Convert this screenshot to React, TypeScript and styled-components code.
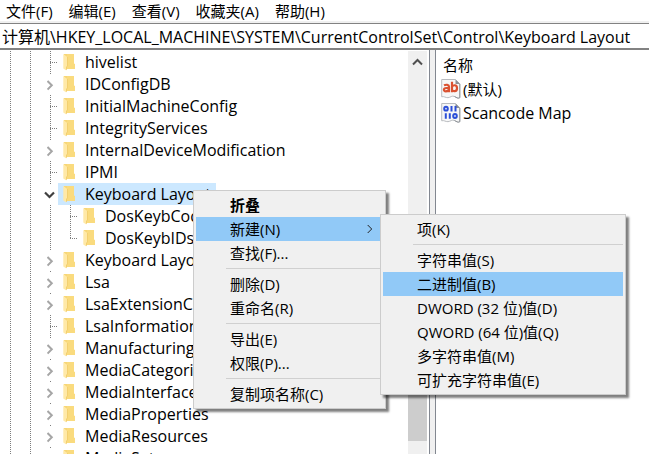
import React from "react";
import styled, { createGlobalStyle, css } from "styled-components";

const GlobalStyle = createGlobalStyle`
  * { box-sizing: border-box; }
  body {
    margin: 0;
    background: #fff;
    color: #000;
    overflow: hidden;
  }
  body, button, input {
    font-family: "Open Sans", "Noto Sans CJK SC", sans-serif;
    font-size: 15px;
    line-height: 22px;
  }
  ul { list-style: none; margin: 0; padding: 0; }
  button { border: 0; padding: 0; background: none; color: inherit; text-align: left; white-space: nowrap; }
`;

const dots = "#7d7d7d";

const Window = styled.div`
  position: relative;
  display: flex;
  flex-direction: column;
  height: 100vh;
  overflow: hidden;
`;

const MenuBar = styled.nav`
  display: flex;
  gap: 16px;
  height: 23px;
  padding-left: 6px;
  border-bottom: 2px solid #f0f0f0;
`;

const AddressInput = styled.input`
  height: 27px;
  width: 100%;
  padding: 0 2px;
  border: solid #828282;
  border-width: 1px 0 2px;
  outline: none;
  background: #fff;
  color: #000;
  font-size: 16px;
`;

const Panes = styled.main`
  display: flex;
  flex: 1;
  min-height: 0;
`;

const TreePane = styled.section`
  display: flex;
  flex: 0 0 66.25%;
  min-width: 0;
  padding-top: 1px;
  border-right: 1px solid #828790;
`;

const Tree = styled.ul`
  flex: 1;
  min-width: 0;
  overflow: hidden;
`;

const TreeRow = styled.li`
  display: flex;
  height: 22px;
`;

const vertical = `linear-gradient(${dots} 50%, transparent 50%) 10px 0 / 1px 2px repeat-y`;

const Guide = styled.span`
  flex: none;
  width: 20px;
  background: ${vertical};
`;

type BranchKind = "leaf" | "last" | "closed" | "open";

const Branch = styled.span<{ $kind: BranchKind }>`
  display: flex;
  flex: none;
  width: 18px;
  ${({ $kind }) =>
    ($kind === "leaf" || $kind === "last") &&
    css`
      height: ${$kind === "last" ? "12px" : "22px"};
      background: ${vertical};
    `}
  ${({ $kind }) =>
    ($kind === "closed" || $kind === "open") &&
    css`
      background: linear-gradient(${dots}, ${dots}) 10px 0 / 1px 1px no-repeat;
    `}
`;

const Stub = styled.span`
  width: 100%;
  margin-left: 10px;
  height: 12px;
  background: linear-gradient(90deg, ${dots} 50%, transparent 50%) 0 11px / 2px 1px repeat-x;
`;

const Expander = styled.button`
  display: flex;
  align-items: center;
  justify-content: flex-end;
  width: 100%;
`;

const TreeLabel = styled.button<{ $selected?: boolean }>`
  display: flex;
  align-items: center;
  gap: 9px;
  padding: 0 5px;
  font-size: 16px;
  background: ${({ $selected }) => ($selected ? "#cce8ff" : "transparent")};
`;

const ScrollBar = styled.div`
  display: flex;
  flex-direction: column;
  width: 19px;
  margin-right: 2px;
  background: #f0f0f0;
`;

const ScrollButton = styled.button`
  display: flex;
  justify-content: center;
  align-items: center;
  height: 21px;
`;

const Thumb = styled.div`
  flex: 1;
  margin: 180px 0 13px;
  background: #cdcdcd;
`;

const Splitter = styled.div`
  width: 5px;
  background: #f0f0f0;
`;

const ValuePane = styled.section`
  flex: 1;
  min-width: 0;
  padding: 3px 5px;
  border-left: 1px solid #828790;
`;

const ValueTable = styled.table`
  border-collapse: collapse;
  th, td { height: 24px; padding: 0; }
  th { font-weight: 400; text-align: left; padding-left: 2px; }
`;

const ValueName = styled.span<{ $latin?: boolean }>`
  display: flex;
  align-items: center;
  gap: 2px;
  font-size: ${({ $latin }) => ($latin ? "16px" : "15px")};
  white-space: nowrap;
`;

const PopupMenu = styled.ul`
  position: absolute;
  padding: 2px;
  border: 1px solid #ccc;
  background: #f0f0f0;
  box-shadow: 3px 3px 2px rgba(0, 0, 0, 0.5);
`;

const ContextMenu = styled(PopupMenu)`
  left: 193px;
  top: 190px;
  width: 193px;
`;

const SubMenu = styled(PopupMenu)`
  left: calc(100% - 3px);
  top: -3px;
  width: 246px;
`;

const MenuEntry = styled.li`
  position: relative;
`;

const MenuButton = styled.button<{ $active?: boolean; $default?: boolean }>`
  display: flex;
  align-items: center;
  justify-content: space-between;
  width: 100%;
  height: 24px;
  padding: 0 10px 0 34px;
  font-weight: ${({ $default }) => ($default ? 700 : 400)};
  background: ${({ $active }) => ($active ? "#91c9f7" : "transparent")};
`;

const Separator = styled.li`
  height: 7px;
  padding: 3px 0 0 30px;
  &::before { content: ""; display: block; height: 1px; background: #d0d0d0; }
`;

const Icon = styled.svg`
  flex: none;
  display: block;
`;

const FolderIcon = () => (
  <Icon width="13" height="18" viewBox="0 0 13 18" aria-hidden="true">
    <path d="M1 1H11V10.5L12 11.5V16H1Z" fill="#f7d676" />
    <path d="M4 1H11V10.5L12 11.5V16H4Z" fill="#fadb7e" />
    <path d="M0.3 1L4.3 4V13L3.3 14V17.6L0.3 15.5Z" fill="#ffe9a8" />
    <path d="M4.5 4V13L3.5 14V17" fill="none" stroke="#efc660" strokeWidth="0.6" />
  </Icon>
);

const ClosedIcon = () => (
  <Icon width="11" height="22" viewBox="0 0 11 22" aria-hidden="true">
    <path d="M0.5 8L4.8 12.3L0.5 16.6" fill="none" stroke="#a6a6a6" strokeWidth="2" />
  </Icon>
);

const OpenIcon = () => (
  <Icon width="14" height="22" viewBox="0 0 14 22" aria-hidden="true">
    <path d="M1 9.5L5.5 14L10 9.5" fill="none" stroke="#404040" strokeWidth="2.2" />
  </Icon>
);

const Paper = ({ children }: { children: React.ReactNode }) => (
  <Icon width="20" height="20" viewBox="0 0 20 20" aria-hidden="true">
    <path
      d="M0.7 0.5H14.5L18.8 4.8V18.7C17 20 15.5 18.5 13.5 17.5C11 16.2 9.5 18.5 7 18.7C4.5 18.8 3 17 0.7 17.8Z"
      fill="#f7f7f7"
      stroke="#b9bcc0"
    />
    <path d="M14.5 0.5L19 5H14.5Z" fill="#8b9096" />
    <path d="M18.8 5V18.7C17 19.8 15.5 18.5 13.5 17.5" fill="none" stroke="#8f9499" />
    {children}
  </Icon>
);

const StringIcon = () => (
  <Paper>
    <g fill="none" stroke="#da5130" strokeWidth="2.2">
      <path d="M3 6.4C5 5.3 8 5.5 8 7.7V13.2M8 9H5.3C2.2 9 2.2 12.3 4.7 12.3C6.3 12.3 8 11.4 8 9.8" />
      <path d="M11 2.8V13.2M11 8C11.6 5.8 16 5.2 16 9.2C16 13.2 11.6 12.7 11 10.5" />
    </g>
  </Paper>
);

const BinaryIcon = () => (
  <Paper>
    <g fill="none" stroke="#2c4fd8" strokeWidth="2">
      <ellipse cx="5" cy="5.7" rx="1.8" ry="1.9" />
      <path d="M10.5 3V8.5M14.5 3V8.5" />
      <path d="M4.8 10.3V15.8M8.8 10.3V15.8" />
      <ellipse cx="14" cy="13" rx="1.8" ry="1.9" />
    </g>
  </Paper>
);

interface TreeNode {
  name: string;
  kind: BranchKind;
  depth?: number;
}

const nodes: TreeNode[] = [
  { name: "hivelist", kind: "leaf" },
  { name: "IDConfigDB", kind: "closed" },
  { name: "InitialMachineConfig", kind: "leaf" },
  { name: "IntegrityServices", kind: "leaf" },
  { name: "InternalDeviceModification", kind: "closed" },
  { name: "IPMI", kind: "leaf" },
  { name: "Keyboard Layout", kind: "open" },
  { name: "DosKeybCodes", kind: "leaf", depth: 1 },
  { name: "DosKeybIDs", kind: "last", depth: 1 },
  { name: "Keyboard Layouts", kind: "closed" },
  { name: "Lsa", kind: "closed" },
  { name: "LsaExtensionConfig", kind: "closed" },
  { name: "LsaInformation", kind: "leaf" },
  { name: "ManufacturingMode", kind: "closed" },
  { name: "MediaCategories", kind: "closed" },
  { name: "MediaInterfaces", kind: "closed" },
  { name: "MediaProperties", kind: "closed" },
  { name: "MediaResources", kind: "closed" },
  { name: "MediaSets", kind: "closed" },
];

const TreeItem = ({ name, kind, depth = 0 }: TreeNode) => (
  <TreeRow role="treeitem" aria-expanded={kind === "open" ? true : kind === "closed" ? false : undefined}>
    {Array.from({ length: depth + 2 }, (_, i) => (
      <Guide key={i} />
    ))}
    <Branch $kind={kind}>
      {kind === "closed" || kind === "open" ? (
        <Expander aria-label={`${name} ${kind === "open" ? "折叠" : "展开"}`}>
          {kind === "open" ? <OpenIcon /> : <ClosedIcon />}
        </Expander>
      ) : (
        <Stub />
      )}
    </Branch>
    <TreeLabel $selected={kind === "open"}>
      <FolderIcon />
      {name}
    </TreeLabel>
  </TreeRow>
);

interface Command {
  label: string;
  active?: boolean;
  bold?: boolean;
  children?: (Command | null)[];
}

const newCommands: (Command | null)[] = [
  { label: "项(K)" },
  null,
  { label: "字符串值(S)" },
  { label: "二进制值(B)", active: true },
  { label: "DWORD (32 位)值(D)" },
  { label: "QWORD (64 位)值(Q)" },
  { label: "多字符串值(M)" },
  { label: "可扩充字符串值(E)" },
];

const commands: (Command | null)[] = [
  { label: "折叠", bold: true },
  { label: "新建(N)", active: true, children: newCommands },
  { label: "查找(F)..." },
  null,
  { label: "删除(D)" },
  { label: "重命名(R)" },
  null,
  { label: "导出(E)" },
  { label: "权限(P)..." },
  null,
  { label: "复制项名称(C)" },
];

const Entries = ({ items }: { items: (Command | null)[] }) => (
  <>
    {items.map((item, i) =>
      item ? (
        <MenuEntry key={i} role="none">
          <MenuButton role="menuitem" $active={item.active} $default={item.bold}>
            {item.label}
            {item.children && (
              <Icon width="6" height="10" viewBox="0 0 6 10" aria-hidden="true">
                <path d="M0.7 1L4.7 5L0.7 9" fill="none" stroke="#222" />
              </Icon>
            )}
          </MenuButton>
          {item.children && (
            <SubMenu role="menu">
              <Entries items={item.children} />
            </SubMenu>
          )}
        </MenuEntry>
      ) : (
        <Separator key={i} role="separator" />
      ),
    )}
  </>
);

export default function App() {
  return (
    <Window>
      <GlobalStyle />
      <MenuBar>
        {["文件(F)", "编辑(E)", "查看(V)", "收藏夹(A)", "帮助(H)"].map((label) => (
          <button key={label}>{label}</button>
        ))}
      </MenuBar>
      <AddressInput
        aria-label="地址"
        defaultValue={"计算机\\HKEY_LOCAL_MACHINE\\SYSTEM\\CurrentControlSet\\Control\\Keyboard Layout"}
      />
      <Panes>
        <TreePane>
          <Tree role="tree">
            {nodes.map((node) => (
              <TreeItem key={node.name} {...node} />
            ))}
          </Tree>
          <ScrollBar>
            <ScrollButton aria-label="向上滚动">
              <Icon width="11" height="8" viewBox="0 0 11 8" aria-hidden="true">
                <path d="M1 6.5L5.5 2L10 6.5" fill="none" stroke="#505050" strokeWidth="2" />
              </Icon>
            </ScrollButton>
            <Thumb />
          </ScrollBar>
        </TreePane>
        <Splitter />
        <ValuePane>
          <ValueTable>
            <thead>
              <tr>
                <th>名称</th>
              </tr>
            </thead>
            <tbody>
              <tr>
                <td>
                  <ValueName>
                    <StringIcon />
                    (默认)
                  </ValueName>
                </td>
              </tr>
              <tr>
                <td>
                  <ValueName $latin>
                    <BinaryIcon />
                    Scancode Map
                  </ValueName>
                </td>
              </tr>
            </tbody>
          </ValueTable>
        </ValuePane>
      </Panes>
      <ContextMenu role="menu">
        <Entries items={commands} />
      </ContextMenu>
    </Window>
  );
}
